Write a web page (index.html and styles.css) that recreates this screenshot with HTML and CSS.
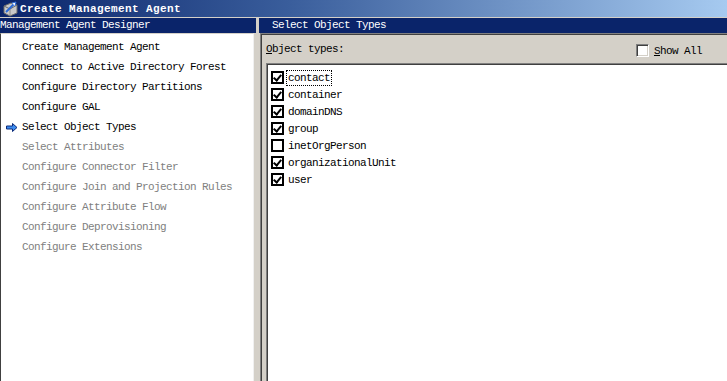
FILE: index.html
```html
<!DOCTYPE html>
<html lang="en">
<head>
    <meta charset="UTF-8">
    <title>Create Management Agent</title>
    <link rel="stylesheet" href="styles.css">
</head>
<body>
    <div class="titlebar">
        <svg class="app-icon" width="16" height="16" viewBox="0 0 16 16">
            <path d="M2 5 L9 2 L15 4 L15 12 L8 15 L2 12 Z" fill="#c8c8c8" stroke="#6a6a6a"/>
            <path d="M2 5 L8 8 L15 4" fill="none" stroke="#6a6a6a"/>
            <path d="M8 8 L8 15" stroke="#8a8a8a"/>
            <path d="M4 11 L12 3" stroke="#2a6ad8" stroke-width="2"/>
            <path d="M10 2 L14 1 L13 5" fill="#ffffff" stroke="#2a6ad8"/>
        </svg>
        <span>Create Management Agent</span>
    </div>

    <div class="main">
        <div class="left">
            <div class="header left-header">Management Agent Designer</div>
            <div class="steps">
                <div class="step"><span class="mark"></span>Create Management Agent</div>
                <div class="step"><span class="mark"></span>Connect to Active Directory Forest</div>
                <div class="step"><span class="mark"></span>Configure Directory Partitions</div>
                <div class="step"><span class="mark"></span>Configure GAL</div>
                <div class="step">
                    <span class="mark">
                        <svg width="12" height="9" viewBox="0 0 12 9">
                            <path d="M0.5 3 L6.5 3 L6.5 0.5 L11 4.5 L6.5 8.5 L6.5 6 L0.5 6 Z" fill="#3c8cf0" stroke="#0a2a7a" stroke-width="1"/>
                        </svg>
                    </span>Select Object Types
                </div>
                <div class="step disabled"><span class="mark"></span>Select Attributes</div>
                <div class="step disabled"><span class="mark"></span>Configure Connector Filter</div>
                <div class="step disabled"><span class="mark"></span>Configure Join and Projection Rules</div>
                <div class="step disabled"><span class="mark"></span>Configure Attribute Flow</div>
                <div class="step disabled"><span class="mark"></span>Configure Deprovisioning</div>
                <div class="step disabled"><span class="mark"></span>Configure Extensions</div>
            </div>
        </div>

        <div class="right">
            <div class="header right-header">Select Object Types</div>
            <div class="page">
                <div class="page-top">
                    <span class="types-label"><u>O</u>bject types:</span>
                    <label class="show-all">
                        <span class="sunken-box"></span>
                        <span><u>S</u>how All</span>
                    </label>
                </div>
                <div class="listbox">
                    <div class="item"><span class="check on"></span><span class="name focus">contact</span></div>
                    <div class="item"><span class="check on"></span><span class="name">container</span></div>
                    <div class="item"><span class="check on"></span><span class="name">domainDNS</span></div>
                    <div class="item"><span class="check on"></span><span class="name">group</span></div>
                    <div class="item"><span class="check"></span><span class="name">inetOrgPerson</span></div>
                    <div class="item"><span class="check on"></span><span class="name">organizationalUnit</span></div>
                    <div class="item"><span class="check on"></span><span class="name">user</span></div>
                </div>
            </div>
        </div>
    </div>
</body>
</html>
```

FILE: styles.css
```css
body {
    margin: 0;
    width: 727px;
    height: 381px;
    overflow: hidden;
    background-color: #d4d0c8;
    font-family: "Liberation Mono", "DejaVu Sans Mono", monospace;
    font-size: 11px;
    letter-spacing: -0.6px;
    color: #000;
}
.titlebar {
    height: 17px;
    margin-bottom: 1px;
    padding-left: 2px;
    display: flex;
    align-items: center;
    gap: 2px;
    background: linear-gradient(to right, #0a246a 0%, #3a5e9c 40%, #a6caf0 100%);
    color: #fff;
    font-weight: bold;
    letter-spacing: 0.4px;
    white-space: nowrap;
}
.app-icon {
    flex: none;
}
.main {
    display: flex;
    height: 363px;
}
.left {
    width: 254px;
    margin-right: 6px;
    display: flex;
    flex-direction: column;
}
.right {
    flex: 1;
    display: flex;
    flex-direction: column;
}
.header {
    height: 15px;
    line-height: 15px;
    background-color: #0a246a;
    color: #fff;
    white-space: nowrap;
    overflow: hidden;
}
.left-header {
    margin-right: -2px;
}
.right-header {
    margin-left: -1px;
    padding-left: 13px;
}
.steps {
    flex: 1;
    padding-top: 3px;
    background-color: #fff;
    border-top: 1px solid #d4d0c8;
    border-left: 1px solid #404040;
    border-right: 1px solid #f0f0f0;
}
.step {
    height: 20px;
    display: flex;
    align-items: center;
    padding-left: 5px;
    white-space: nowrap;
}
.step.disabled {
    color: #808080;
}
.mark {
    width: 16px;
    height: 9px;
    display: flex;
    align-items: center;
}
.page {
    flex: 1;
    display: flex;
    flex-direction: column;
    border-top: 1px solid #808080;
    border-left: 1px solid #808080;
    box-shadow: inset 1px 1px 0 #404040;
}
.page-top {
    height: 29px;
    display: flex;
    padding: 0 25px 0 5px;
}
.types-label {
    padding-top: 9px;
}
.show-all {
    margin-left: auto;
    padding-top: 11px;
    display: flex;
    align-items: flex-start;
    gap: 5px;
}
.sunken-box {
    width: 13px;
    height: 13px;
    margin-top: -1px;
    box-sizing: border-box;
    background-color: #fff;
    border-top: 1px solid #808080;
    border-left: 1px solid #808080;
    border-right: 1px solid #fff;
    border-bottom: 1px solid #fff;
    box-shadow: inset 1px 1px 0 #404040, inset -1px -1px 0 #d4d0c8;
}
.listbox {
    flex: 1;
    margin-left: 5px;
    padding: 5px 0 0 4px;
    background-color: #fff;
    border-top: 1px solid #808080;
    border-left: 1px solid #808080;
    box-shadow: inset 1px 1px 0 #404040;
}
.item {
    height: 17px;
    display: flex;
    align-items: center;
    gap: 2px;
}
.check {
    width: 13px;
    height: 13px;
    box-sizing: border-box;
    border: 2px solid #000;
    background-color: #fff;
    position: relative;
}
.check.on::after {
    content: "";
    position: absolute;
    left: 2px;
    top: 0px;
    width: 3px;
    height: 6px;
    border-right: 2px solid #000;
    border-bottom: 2px solid #000;
    transform: rotate(40deg);
}
.name {
    padding: 1px 1px;
    border: 1px solid transparent;
    white-space: nowrap;
}
.name.focus {
    border: 1px dotted #000;
}
```
